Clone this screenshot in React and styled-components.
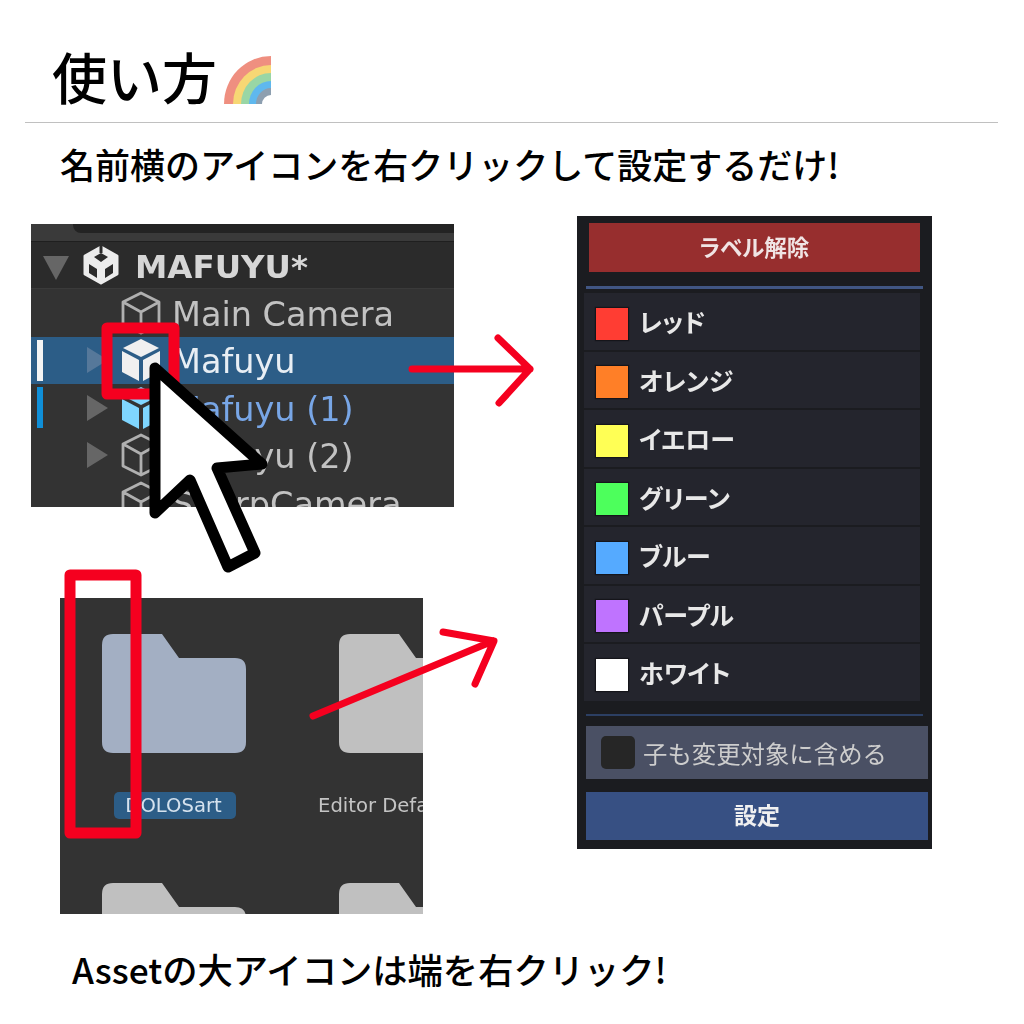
import React from "react";
import styled, { createGlobalStyle } from "styled-components";

const RED = "#f5001f";
const JP = `"Noto Sans CJK JP", "Noto Sans", sans-serif`;
const UI = `"DejaVu Sans", Verdana, sans-serif`;

const labels = [
	{ name: "レッド", color: "#ff3d33" },
	{ name: "オレンジ", color: "#ff7f27" },
	{ name: "イエロー", color: "#ffff55" },
	{ name: "グリーン", color: "#4dff5c" },
	{ name: "ブルー", color: "#55aaff" },
	{ name: "パープル", color: "#bf73ff" },
	{ name: "ホワイト", color: "#ffffff" },
];

const treeRows = [
	{ name: "Main Camera" },
	{ name: "Mafuyu", selected: true, arrow: true, cube: "solid", marker: "#f4f4f4" },
	{ name: "Mafuyu (1)", arrow: true, cube: "blue", marker: "#0f8fd8", tint: "#78a6e6" },
	{ name: "Mafuyu (2)", arrow: true },
	{ name: "SharpCamera" },
];

const Cube = ({ tone }) => {
	if (tone === "solid" || tone === "blue") {
		const fill = tone === "blue" ? "#7fd6ff" : "#f0f0f0";
		return (
			<CubeSvg viewBox="0 0 40 44">
				<path d="M20 1 L38 10 L20 19 L2 10 Z" fill={fill} />
				<path d="M1 13 L18 22 L18 43 L1 34 Z" fill={fill} />
				<path d="M22 22 L39 13 L39 34 L22 43 Z" fill={fill} />
			</CubeSvg>
		);
	}
	return (
		<CubeSvg viewBox="0 0 40 44">
			<path d="M20 2 L38 11 L38 33 L20 42 L2 33 L2 11 Z M2 11 L20 21 L38 11 M20 21 L20 42" fill="none" stroke="#b0b0b0" strokeWidth="2.8" strokeLinejoin="round" />
		</CubeSvg>
	);
};

const UnityLogo = () => (
	<LogoSvg viewBox="0 0 38 40">
		<path d="M19 2 L35 11 L35 29 L19 38 L3 29 L3 11 Z" fill="#ececec" stroke="#ececec" strokeWidth="3" strokeLinejoin="round" />
		<path d="M17.5 0 H20.5 V8 H17.5 Z M19 8 L26 12 L19 17 L12 12 Z M7 19 L15 24 L15 33 L7 28 Z M31 19 L23 24 L23 33 L31 28 Z" fill="#2b2b2b" />
	</LogoSvg>
);

const Folder = ({ color }) => (
	<FolderSvg viewBox="0 0 144 119">
		<path
			d="M11 0 H60 L77 24 H133 Q144 24 144 35 V108 Q144 119 133 119 H11 Q0 119 0 108 V11 Q0 0 11 0 Z"
			fill={color}
		/>
	</FolderSvg>
);

const Rainbow = () => (
	<RainbowSvg viewBox="0 0 50 50">
		<path d="M48 49 V1 A47 48 0 0 0 1 49 Z" fill="#ef8f80" />
		<path d="M48 49 V10 A38 39 0 0 0 10 49 Z" fill="#f7d774" />
		<path d="M48 49 V18 A30 31 0 0 0 18 49 Z" fill="#99d6a5" />
		<path d="M48 49 V26 A22 23 0 0 0 26 49 Z" fill="#5fb8ee" />
		<path d="M48 49 V33 A15 16 0 0 0 33 49 Z" fill="#8d9fb0" />
		<path d="M48 49 V40 A9 9 0 0 0 39 49 Z" fill="#ffffff" />
	</RainbowSvg>
);

const App = () => {
	return (
		<Page>
			<GlobalStyle />
			<Header>
				<Title>使い方</Title>
				<Rainbow />
			</Header>
			<Divider />
			<Subtitle>名前横のアイコンを右クリックして設定するだけ!</Subtitle>
			<Main>
				<LeftColumn>
					<HierarchyPanel>
						<TopStrip>
							<TopTab />
						</TopStrip>
						<SceneRow>
							<DownArrow />
							<UnityLogo />
							<SceneName>MAFUYU*</SceneName>
						</SceneRow>
						{treeRows.map((row) => (
							<TreeRow key={row.name} $selected={row.selected}>
								<Marker $color={row.marker} />
								<RightArrow $visible={row.arrow} $selected={row.selected} />
								<Cube tone={row.cube} />
								<TreeName $tint={row.tint} $selected={row.selected}>
									{row.name}
								</TreeName>
							</TreeRow>
						))}
					</HierarchyPanel>
					<AssetPanel>
						<AssetCell>
							<Folder color="#a3afc3" />
							<AssetLabel $selected>DOLOSart</AssetLabel>
						</AssetCell>
						<AssetCell>
							<Folder color="#c0c0c0" />
							<AssetLabel>Editor Default Resources</AssetLabel>
						</AssetCell>
						<AssetCell>
							<Folder color="#c0c0c0" />
						</AssetCell>
						<AssetCell>
							<Folder color="#c0c0c0" />
						</AssetCell>
					</AssetPanel>
				</LeftColumn>
				<LabelPanel>
					<ResetButton>ラベル解除</ResetButton>
					<PanelLine $color="#415683" $height={3} />
					<LabelList>
						{labels.map((label) => (
							<LabelRow key={label.name}>
								<Swatch $color={label.color} />
								<LabelName>{label.name}</LabelName>
							</LabelRow>
						))}
					</LabelList>
					<PanelLine $color="#2c3f63" $height={2} $top={13} />
					<ChildToggle>
						<CheckBox />
						<ToggleText>子も変更対象に含める</ToggleText>
					</ChildToggle>
					<ApplyButton>設定</ApplyButton>
				</LabelPanel>
			</Main>
			<Caption>Assetの大アイコンは端を右クリック!</Caption>
			<Overlay viewBox="0 0 1024 1024">
				<g fill="none" stroke={RED} strokeLinecap="round" strokeLinejoin="round">
					<rect x="107" y="328" width="67" height="66" strokeWidth="11" />
					<rect x="70" y="575" width="66" height="258" strokeWidth="11" />
					<path d="M412 369 H530 M498 338 L530 369 L499 403" strokeWidth="7" />
					<path d="M313 716 L493 641 M443 632 L494 641 L475 684" strokeWidth="7" />
				</g>
				<path
					d="M155 368 L262 464 L217 468 L255 553 L228 567 L190 480 L155 513 Z"
					fill="#ffffff"
					stroke="#000000"
					strokeWidth="11"
					strokeLinejoin="round"
				/>
			</Overlay>
		</Page>
	);
};

const GlobalStyle = createGlobalStyle`
	html, body {
		margin: 0;
		padding: 0;
		background: #ffffff;
	}
`;
const Page = styled.div`
	position: relative;
	width: 1024px;
	height: 1024px;
	overflow: hidden;
	background: #ffffff;
	color: #000000;
	font-family: ${JP};
`;
const Header = styled.div`
	display: flex;
	align-items: flex-start;
	height: 122px;
	padding: 0 0 0 52px;
	box-sizing: border-box;
`;
const Title = styled.div`
	margin-top: 40px;
	font-size: 55px;
	font-weight: 500;
	line-height: 70px;
`;
const RainbowSvg = styled.svg`
	width: 50px;
	height: 50px;
	margin: 55px 0 0 6px;
`;
const Divider = styled.div`
	width: 973px;
	height: 1px;
	margin-left: 25px;
	background: #c0c0c0;
`;
const Subtitle = styled.div`
	height: 93px;
	padding-left: 60px;
	font-size: 35px;
	font-weight: 500;
	line-height: 82px;
	white-space: nowrap;
`;
const Main = styled.div`
	display: flex;
	align-items: flex-start;
	height: 698px;
`;
const LeftColumn = styled.div`
	display: flex;
	flex-direction: column;
	width: 577px;
	padding-top: 8px;
	box-sizing: border-box;
`;
const HierarchyPanel = styled.div`
	width: 423px;
	height: 283px;
	margin-left: 31px;
	overflow: hidden;
	background: #333333;
	font-family: ${UI};
	filter: blur(0.5px);
`;
const TopStrip = styled.div`
	height: 17px;
	background: #3a3a3a;
	border-bottom: 1px solid #1f1f1f;
`;
const TopTab = styled.div`
	height: 9px;
	margin-left: 42px;
	background: #232323;
	border-radius: 0 0 0 8px;
`;
const SceneRow = styled.div`
	display: flex;
	align-items: center;
	height: 46px;
	padding-left: 12px;
	background: #2b2b2b;
	border-bottom: 1px solid #3a3a3a;
`;
const DownArrow = styled.div`
	width: 0;
	height: 0;
	margin-top: 6px;
	border-left: 13px solid transparent;
	border-right: 13px solid transparent;
	border-top: 24px solid #666666;
`;
const LogoSvg = styled.svg`
	width: 38px;
	height: 40px;
	margin-left: 13px;
`;
const SceneName = styled.div`
	margin: 3px 0 0 15px;
	font-size: 32.5px;
	font-weight: 700;
	color: #d6d6d6;
`;
const TreeRow = styled.div`
	display: flex;
	align-items: center;
	height: 47.5px;
	background: ${(props) => (props.$selected ? "#2c5d87" : "transparent")};
`;
const Marker = styled.div`
	width: 6px;
	height: 41px;
	margin-left: 6px;
	background: ${(props) => props.$color || "transparent"};
`;
const RightArrow = styled.div`
	width: 0;
	height: 0;
	margin: 0 13px 0 44px;
	border-top: 13px solid transparent;
	border-bottom: 13px solid transparent;
	border-left: 21px solid ${(props) => {
		if (!props.$visible) return "transparent";
		return props.$selected ? "#56789a" : "#666666";
	}};
`;
const CubeSvg = styled.svg`
	flex: none;
	width: 40px;
	height: 44px;
`;
const TreeName = styled.div`
	margin: 3px 0 0 11px;
	font-size: 33.5px;
	white-space: nowrap;
	color: ${(props) => {
		if (props.$selected) return "#e8eef4";
		return props.$tint || "#c2c2c2";
	}};
`;
const AssetPanel = styled.div`
	display: grid;
	grid-template-columns: repeat(2, 237px);
	grid-auto-rows: 249px;
	width: 363px;
	height: 316px;
	margin: 91px 0 0 60px;
	padding: 36px 0 0 42px;
	box-sizing: border-box;
	overflow: hidden;
	background: #333333;
	font-family: ${UI};
	filter: blur(0.4px);
`;
const AssetCell = styled.div`
	display: flex;
	flex-direction: column;
	width: 144px;
`;
const FolderSvg = styled.svg`
	flex: none;
	width: 144px;
	height: 119px;
`;
const AssetLabel = styled.div`
	align-self: flex-start;
	box-sizing: border-box;
	width: ${(props) => (props.$selected ? "122px" : "186px")};
	height: 27px;
	margin: 39px 0 0 ${(props) => (props.$selected ? "12px" : "-21px")};
	padding-right: ${(props) => (props.$selected ? "3px" : "0")};
	border-radius: 5px;
	overflow: hidden;
	white-space: nowrap;
	font-size: 19.6px;
	line-height: 28px;
	text-align: ${(props) => (props.$selected ? "center" : "left")};
	color: ${(props) => (props.$selected ? "#d5e2ee" : "#c4c4c4")};
	background: ${(props) => (props.$selected ? "#2c5d87" : "transparent")};
`;
const LabelPanel = styled.div`
	display: flex;
	flex-direction: column;
	width: 355px;
	height: 633px;
	background: #1b1c20;
	filter: blur(0.4px);
`;
const ResetButton = styled.div`
	width: 331px;
	height: 49px;
	margin: 7px 0 0 12px;
	background: #972e2e;
	color: #f0e4e4;
	font-size: 22.5px;
	font-weight: 700;
	font-feature-settings: "palt";
	line-height: 47px;
	text-align: center;
`;
const PanelLine = styled.div`
	width: 337px;
	height: ${(props) => props.$height}px;
	margin: ${(props) => props.$top || 14}px 0 0 9px;
	background: ${(props) => props.$color};
`;
const LabelList = styled.div`
	display: flex;
	flex-direction: column;
	gap: 2px;
	margin: 4px 0 0 7px;
`;
const LabelRow = styled.div`
	display: flex;
	align-items: center;
	width: 336px;
	height: 56.5px;
	background: #24252d;
`;
const Swatch = styled.div`
	width: 32px;
	height: 32px;
	margin: 5px 0 0 12px;
	background: ${(props) => props.$color};
	box-shadow: 0 0 1px 1px #15151a;
`;
const LabelName = styled.div`
	margin-left: 11px;
	font-size: 25px;
	font-weight: 700;
	font-feature-settings: "palt";
	color: #e8e8e8;
`;
const ChildToggle = styled.div`
	display: flex;
	align-items: center;
	width: 342px;
	height: 53px;
	margin: 10px 0 0 9px;
	background: #4a5064;
`;
const CheckBox = styled.div`
	width: 34px;
	height: 33px;
	margin-left: 15px;
	background: #262626;
	border-radius: 5px;
`;
const ToggleText = styled.div`
	margin-left: 8px;
	font-size: 24.4px;
	color: #cdcdcd;
	white-space: nowrap;
`;
const ApplyButton = styled.div`
	width: 342px;
	height: 48px;
	margin: 13px 0 0 9px;
	background: #375083;
	color: #f0f0f0;
	font-size: 23px;
	font-weight: 700;
	line-height: 44px;
	text-align: center;
`;
const Caption = styled.div`
	margin-top: 31px;
	padding-left: 72px;
	font-size: 35.3px;
	font-weight: 500;
	line-height: 48px;
	white-space: nowrap;
`;
const Overlay = styled.svg`
	position: absolute;
	top: 0;
	left: 0;
	width: 1024px;
	height: 1024px;
	pointer-events: none;
`;

export default App;
